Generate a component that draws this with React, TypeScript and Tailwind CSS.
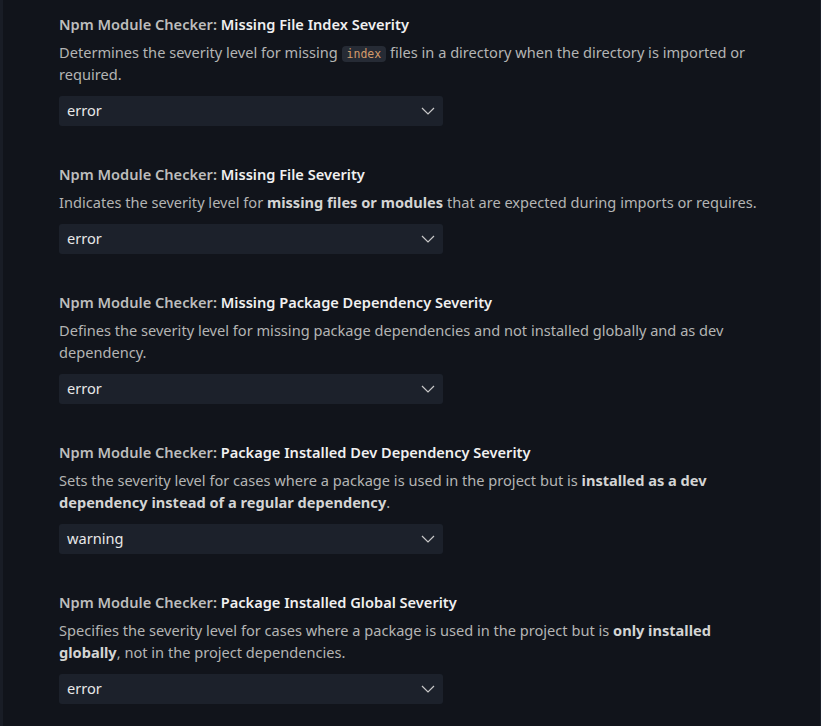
import type { ReactNode } from "react";

type Setting = {
  name: string;
  description: ReactNode;
  value: string;
};

const settings: Setting[] = [
  {
    name: "Missing File Index Severity",
    description: (
      <>
        Determines the severity level for missing{" "}
        <code className="rounded-[4px] bg-[#262b35] px-[5px] py-[1px] font-['DejaVu_Sans_Mono',monospace] text-[11.5px] leading-none text-[#d39b6a]">
          index
        </code>{" "}
        files in a directory when the directory is imported or required.
      </>
    ),
    value: "error",
  },
  {
    name: "Missing File Severity",
    description: (
      <>
        Indicates the severity level for <b className="font-bold text-[#d4d4d4]">missing files or modules</b> that
        are expected during imports or requires.
      </>
    ),
    value: "error",
  },
  {
    name: "Missing Package Dependency Severity",
    description:
      "Defines the severity level for missing package dependencies and not installed globally and as dev dependency.",
    value: "error",
  },
  {
    name: "Package Installed Dev Dependency Severity",
    description: (
      <>
        Sets the severity level for cases where a package is used in the project but is{" "}
        <b className="font-bold text-[#d4d4d4]">installed as a dev dependency instead of a regular dependency</b>.
      </>
    ),
    value: "warning",
  },
  {
    name: "Package Installed Global Severity",
    description: (
      <>
        Specifies the severity level for cases where a package is used in the project but is{" "}
        <b className="font-bold text-[#d4d4d4]">only installed globally</b>, not in the project dependencies.
      </>
    ),
    value: "error",
  },
];

function SettingItem({ setting }: { setting: Setting }) {
  return (
    <div className="pt-[13px] pb-[24px]">
      <div className="text-[14.6px] leading-[22px] font-semibold">
        <span className="text-[#bdbdbd]">Npm Module Checker: </span>
        <span className="text-[#f0f0f0]">{setting.name}</span>
      </div>
      <div className="mt-[6px] max-w-[704px] text-[14.6px] leading-[22px] text-[#b4b4b4]">{setting.description}</div>
      <div className="mt-[11px] flex h-[30px] w-[384px] items-center justify-between rounded-[3px] bg-[#1c212b] pl-[8px] pr-[8px]">
        <span className="text-[14.6px] text-[#e8e8e8]">{setting.value}</span>
        <svg width="14" height="8" viewBox="0 0 14 8" fill="none" className="text-[#c8c8c8]">
          <polyline points="1,1 7,7 13,1" stroke="currentColor" strokeWidth="1.2" />
        </svg>
      </div>
    </div>
  );
}

export default function App() {
  return (
    <div className="flex h-[726px] w-[821px] bg-[#11141b] font-['Noto_Sans',sans-serif]">
      <div className="w-[3px] bg-[#191d26]" />
      <div className="flex-1 pl-[56px]">
        {settings.map((s) => (
          <SettingItem key={s.name} setting={s} />
        ))}
      </div>
      <div className="w-[1px] bg-[#1a1f29]" />
    </div>
  );
}
